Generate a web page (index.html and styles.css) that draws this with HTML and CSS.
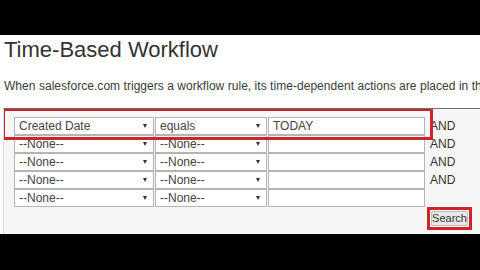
FILE: index.html
```html
<!DOCTYPE html>
<html>
<head>
<meta charset="utf-8">
<link rel="stylesheet" href="styles.css">
</head>
<body>
<div class="bar-top"></div>
<main class="page">
  <h1 class="title">Time-Based Workflow</h1>
  <p class="desc">When salesforce.com triggers a workflow rule, its time-dependent actions are placed in the queue</p>
  <section class="panel">
    <div class="row">
      <div class="sel w1"><span>Created Date</span><i class="arr"></i></div>
      <div class="sel w2"><span>equals</span><i class="arr"></i></div>
      <div class="inp">TODAY</div>
      <span class="and">AND</span>
    </div>
    <div class="row">
      <div class="sel w1"><span>--None--</span><i class="arr"></i></div>
      <div class="sel w2"><span>--None--</span><i class="arr"></i></div>
      <div class="inp"></div>
      <span class="and">AND</span>
    </div>
    <div class="row">
      <div class="sel w1"><span>--None--</span><i class="arr"></i></div>
      <div class="sel w2"><span>--None--</span><i class="arr"></i></div>
      <div class="inp"></div>
      <span class="and">AND</span>
    </div>
    <div class="row">
      <div class="sel w1"><span>--None--</span><i class="arr"></i></div>
      <div class="sel w2"><span>--None--</span><i class="arr"></i></div>
      <div class="inp"></div>
      <span class="and">AND</span>
    </div>
    <div class="row">
      <div class="sel w1"><span>--None--</span><i class="arr"></i></div>
      <div class="sel w2"><span>--None--</span><i class="arr"></i></div>
      <div class="inp"></div>
    </div>
    <div class="actions">
      <span class="hl-btn"><button class="btn">Search</button></span>
    </div>
    <div class="annot"></div>
  </section>
</main>
<div class="bar-bottom"></div>
</body>
</html>
```

FILE: styles.css
```css
html, body {
  margin: 0;
  padding: 0;
  background: #000;
  width: 480px;
  height: 270px;
  overflow: hidden;
  font-family: "Liberation Sans", Arial, sans-serif;
}
.bar-top {
  height: 35px;
  background: #000;
}
.page {
  height: 199px;
  background: #fff;
  overflow: hidden;
}
.title {
  margin: 2px 0 0 4px;
  font-size: 22px;
  line-height: 26px;
  font-weight: normal;
  color: #333;
  white-space: nowrap;
}
.desc {
  margin: 16px 0 0 4px;
  font-size: 12px;
  line-height: 14px;
  letter-spacing: 0.04px;
  color: #3a3a3a;
  white-space: nowrap;
}
.panel {
  position: relative;
  margin: 15px 0 0 3px;
  height: 126px;
  box-sizing: border-box;
  padding: 8px 0 0 10px;
  background: #f6f6f6;
  border-top: 1px solid #6e6e6e;
  border-left: 1px solid #dcdcdc;
  overflow: hidden;
}
.row {
  display: flex;
  height: 18px;
  gap: 1px;
  align-items: stretch;
}
.sel, .inp {
  box-sizing: border-box;
  background: #fff;
  border: 1px solid #b4b4b4;
  display: flex;
  align-items: center;
  padding-left: 4px;
  font-size: 12px;
  color: #444;
}
.w1 { width: 140px; }
.w2 { width: 112px; }
.inp { width: 157px; }
.arr {
  margin-left: auto;
  margin-right: 6px;
  width: 0;
  height: 0;
  border-left: 2.5px solid transparent;
  border-right: 2.5px solid transparent;
  border-top: 4px solid #333;
}
.and {
  margin-left: 4px;
  font-size: 12px;
  line-height: 18px;
  color: #333;
}
.actions {
  display: flex;
  justify-content: flex-end;
  padding-right: 8px;
}
.hl-btn {
  display: inline-flex;
  border: 3px solid #d2232a;
  padding: 1px;
  background: #fafafa;
}
.btn {
  font-family: "Liberation Sans", Arial, sans-serif;
  font-size: 11px;
  color: #333;
  height: 15px;
  width: 37px;
  padding: 0;
  line-height: 13px;
  background: #e9e9e9;
  border: 1px solid #bdbdbd;
  border-radius: 2px;
}
.annot {
  position: absolute;
  left: -2px;
  top: -1px;
  width: 431px;
  height: 32px;
  box-sizing: border-box;
  border: 3px solid #d2232a;
}
.bar-bottom {
  height: 36px;
  background: #000;
}
```
